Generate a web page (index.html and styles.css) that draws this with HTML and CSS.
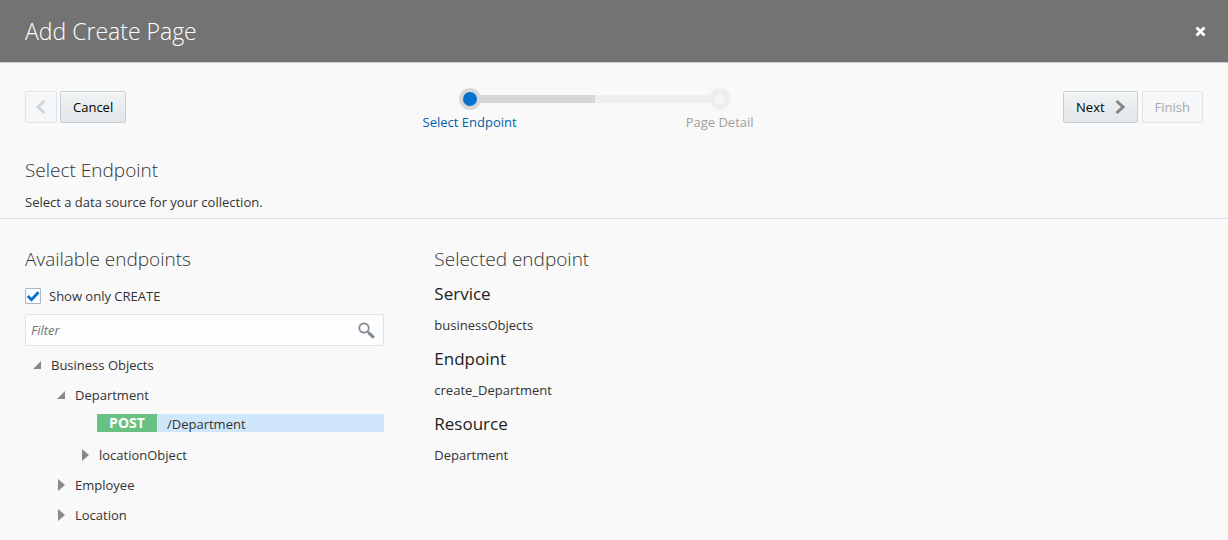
FILE: index.html
```html
<!DOCTYPE html>
<html lang="en">
<head>
<meta charset="utf-8">
<meta name="viewport" content="width=device-width, initial-scale=1">
<title>Add Create Page</title>
<link rel="stylesheet" href="styles.css">
</head>
<body>
<header class="titlebar">
  <h1 class="titlebar-text">Add Create Page</h1>
  <button class="close" type="button" aria-label="Close">
    <svg width="11" height="11" viewBox="0 0 11 11"><path d="M1.5 1.5l8 8M9.5 1.5l-8 8" stroke="#fff" stroke-width="2.8" fill="none"/></svg>
  </button>
</header>
<main>
  <nav class="wizard">
    <div class="group">
      <button class="btn btn-icon" type="button" disabled aria-label="Back">
        <svg width="10" height="14" viewBox="0 0 10 14"><path d="M8.5 1L2 7l6.500 6" stroke="#d3d6d8" stroke-width="3" fill="none"/></svg>
      </button>
      <button class="btn" type="button">Cancel</button>
    </div>
    <ol class="train">
      <li class="step step-current"><span class="dot"></span><span class="step-label">Select Endpoint</span></li>
      <li class="step step-next"><span class="dot"></span><span class="step-label">Page Detail</span></li>
    </ol>
    <div class="group group-end">
      <button class="btn" type="button">Next
        <svg width="10" height="14" viewBox="0 0 10 14"><path d="M1.500 1L8 7l-6.500 6" stroke="#82878b" stroke-width="3" fill="none"/></svg>
      </button>
      <button class="btn" type="button" disabled>Finish</button>
    </div>
  </nav>
  <section class="intro">
    <h2 class="heading">Select Endpoint</h2>
    <p class="text">Select a data source for your collection.</p>
  </section>
  <div class="columns">
    <section class="column">
      <h2 class="heading">Available endpoints</h2>
      <label class="check"><input class="checkbox" type="checkbox" checked>Show only CREATE</label>
      <div class="search">
        <input class="search-input" type="text" placeholder="Filter" aria-label="Filter">
        <svg width="17" height="17" viewBox="0 0 17 17"><circle cx="6" cy="6" r="4.700" fill="none" stroke="#82878b" stroke-width="1.700"/><path d="M9.300 9.300l2 2" stroke="#82878b" stroke-width="1.700"/><path d="M10.600 10.600l5.200 5.200" stroke="#82878b" stroke-width="3"/></svg>
      </div>
      <ul class="tree" role="tree">
        <li role="treeitem" aria-expanded="true">
          <div class="row"><svg class="arrow" width="10" height="10" viewBox="0 0 10 10"><path d="M9 1v8H1z" fill="#868a8e"/></svg>Business Objects</div>
          <ul class="branch" role="group">
            <li role="treeitem" aria-expanded="true">
              <div class="row"><svg class="arrow" width="10" height="10" viewBox="0 0 10 10"><path d="M9 1v8H1z" fill="#868a8e"/></svg>Department</div>
              <ul class="branch" role="group">
                <li class="leaf" role="treeitem" aria-selected="true"><span class="method">POST</span><span class="path">/Department</span></li>
                <li role="treeitem" aria-expanded="false"><div class="row"><svg class="arrow" width="10" height="12" viewBox="0 0 10 12"><path d="M2 0l7 6-7 6z" fill="#868a8e"/></svg>locationObject</div></li>
              </ul>
            </li>
            <li role="treeitem" aria-expanded="false"><div class="row"><svg class="arrow" width="10" height="12" viewBox="0 0 10 12"><path d="M2 0l7 6-7 6z" fill="#868a8e"/></svg>Employee</div></li>
            <li role="treeitem" aria-expanded="false"><div class="row"><svg class="arrow" width="10" height="12" viewBox="0 0 10 12"><path d="M2 0l7 6-7 6z" fill="#868a8e"/></svg>Location</div></li>
          </ul>
        </li>
      </ul>
    </section>
    <section class="column">
      <h2 class="heading">Selected endpoint</h2>
      <dl class="details">
        <dt class="term">Service</dt><dd class="value">businessObjects</dd>
        <dt class="term">Endpoint</dt><dd class="value">create_Department</dd>
        <dt class="term">Resource</dt><dd class="value">Department</dd>
      </dl>
    </section>
  </div>
</main>
</body>
</html>
```
FILE: styles.css
```css
* { box-sizing: border-box; }
body {
  margin: 0;
  background: #f9f9f9;
  color: #333;
  font: 13px/20px "Open Sans", "Noto Sans", sans-serif;
}
h1, h2, p, ul, ol, dl, dd { margin: 0; padding: 0; }
ul, ol { list-style: none; }
svg { display: block; flex: none; }

.titlebar {
  display: flex;
  align-items: center;
  justify-content: space-between;
  padding: 15px 22px 15px 25px;
  background: #737373;
  border-bottom: 1px solid #c4ced7;
}
.titlebar-text { color: #fff; font-size: 23px; line-height: 32px; font-weight: 300; }
.close { padding: 0; border: 0; background: none; }

.wizard { display: flex; align-items: flex-start; padding: 28px 25px 0; }
.group { display: flex; gap: 3px; }
.group-end { gap: 4px; }
.btn {
  display: flex;
  align-items: center;
  gap: 10px;
  height: 32px;
  padding: 0 12px;
  border: 1px solid #c4ced7;
  border-radius: 2px;
  background: linear-gradient(#f1f3f4, #e3e7ea);
  box-shadow: inset 0 1px #fcfdfd;
  color: #000;
  font: inherit;
}
.btn-icon { padding: 0 10px; }
.btn:disabled { background: #f5f7f9; border-color: #dfe4e9; color: #a4a7aa; }

.train { display: flex; flex: 1; justify-content: center; }
.step {
  display: flex;
  flex-direction: column;
  align-items: center;
  width: 250px;
  margin: -3px 0 0;
}
.step { background: linear-gradient(#efefef, #efefef) no-repeat 0 7px / 125px 8px; }
.step-current { background: linear-gradient(#d6d7d8, #d6d7d8) no-repeat 100% 7px / 125px 8px; }
.dot { width: 22px; height: 22px; border: 4px solid #efefef; border-radius: 50%; background: #f4f6f9; box-shadow: inset 0 0 0 1px #dfe4e9; }
.step-current .dot { border-color: #d6d7d8; background: #0572ce; box-shadow: none; }
.step-label { margin-top: 2px; color: #9e9e9e; }
.step-current .step-label { color: #045fab; }

.intro { padding: 26px 25px 6px; border-bottom: 1px solid #d6dfe6; }
.heading { font-size: 19px; line-height: 24px; font-weight: 300; }
.intro .text { margin-top: 10px; }

.columns { display: grid; grid-template-columns: 1fr 2fr; }
.column { padding: 28px 25px 10px; min-width: 0; }
.check { display: flex; align-items: center; gap: 8px; margin-top: 15px; }
.checkbox {
  appearance: none;
  width: 16px;
  height: 16px;
  margin: 0;
  border: 1px solid #a9b7c4;
  border-radius: 1px;
  background: #fcfdfe;
}
.checkbox:checked {
  background: #fcfdfe url("data:image/svg+xml,%3Csvg xmlns='http://www.w3.org/2000/svg' viewBox='0 0 14 14'%3E%3Cpath d='M1.800 7l3.700 3.700L12.500 3.200' fill='none' stroke='%230572ce' stroke-width='2.800'/%3E%3C/svg%3E") center / 14px no-repeat;
}
.search {
  display: flex;
  align-items: center;
  height: 32px;
  margin-top: 8px;
  padding: 0 8px 0 5px;
  border: 1px solid #dfe4e7;
  border-radius: 2px;
  background: #fcfdfe;
}
.search-input { flex: 1; min-width: 0; padding: 0; border: 0; outline: 0; background: none; color: #333; font: inherit; }
.search-input::placeholder { color: #737373; opacity: 1; font-style: italic; }

.tree { padding: 4px 0 0 7px; }
.row { display: flex; align-items: center; gap: 9px; height: 30px; }
.branch { padding-left: 24px; }
.leaf { display: flex; margin: 4px 0 8px 17px; line-height: 18px; background: #d0e7fb; }
.method { width: 60px; background: #68c182; color: #fff; font-size: 14px; font-weight: 700; text-align: center; }
.path { padding: 2px 0 0 10px; line-height: 16px; }

.details { padding-top: 9px; }
.term { color: #222; font-size: 17px; line-height: 28px; }
.value { padding: 7px 0 10px; }
```
